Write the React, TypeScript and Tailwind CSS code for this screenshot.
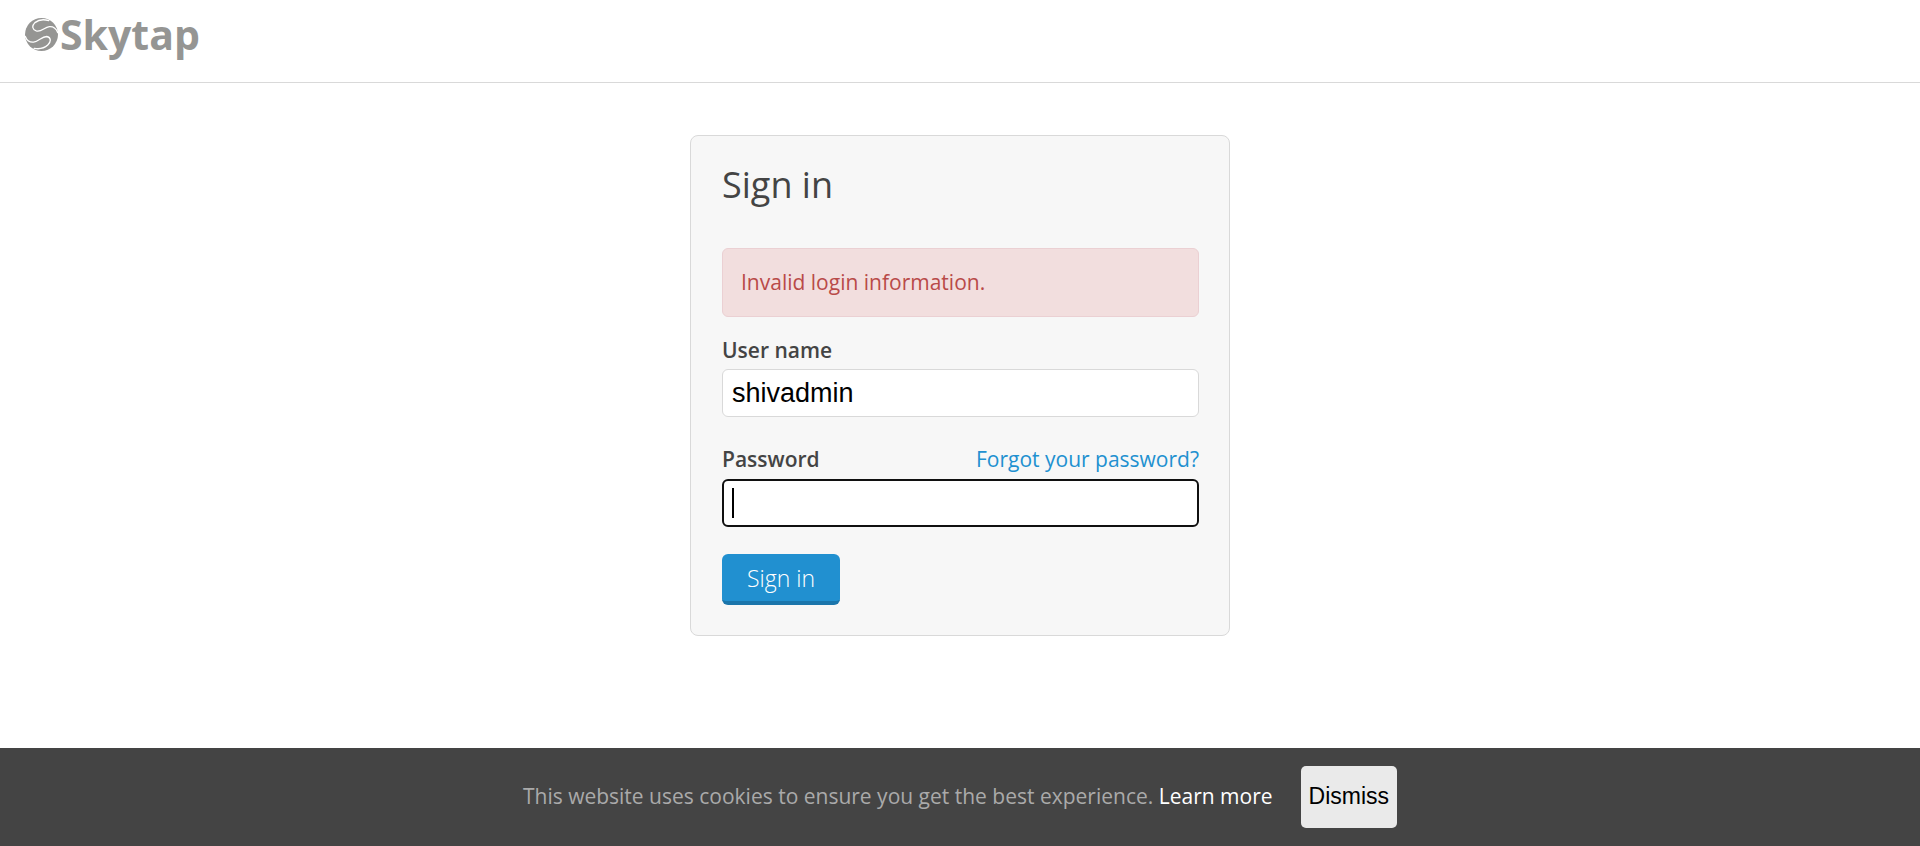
import React from 'react';

function Logo() {
  return (
    <a href="#" aria-label="Skytap" className="flex items-center gap-[2px] text-[#959593]">
      <svg viewBox="0 0 100 100" className="size-[33px]" aria-hidden="true">
        <circle cx="50" cy="50" r="50" fill="currentColor" />
        <g fill="none" stroke="#fff" strokeWidth="4" strokeLinecap="round">
          <path d="M72 8C56 3 40 6 30 14C20 24 22 35 34 39C50 43 58 28 74 26C88 25 95 33 99 44" />
          <path d="M1 56C5 67 14 74 26 73C42 71 50 56 66 56C79 58 80 72 69 82C58 92 44 95 28 92" />
        </g>
      </svg>
      <span className="text-[41px] leading-[46px] font-bold">Skytap</span>
    </a>
  );
}

export default function App() {
  return (
    <div className="flex min-h-screen flex-col bg-white font-['Open_Sans',sans-serif] text-[21px] leading-[29px] text-[#444]">
      <header className="border-b border-[#d9d9d9] px-[25px] pt-[11px] pb-[25px]">
        <Logo />
      </header>

      <main className="flex grow justify-center px-4 pt-[52px] pb-8">
        <form className="w-full max-w-[540px] self-start rounded-lg border border-[#d9d9d9] bg-[#f7f7f7] pt-[29px] pr-[30px] pb-[30px] pl-[31px]">
          <h1 className="text-[36px] leading-[40px]">Sign in</h1>
          <p role="alert" className="mt-[43px] rounded-md border border-[#ebd0d3] bg-[#f2dede] px-[18px] py-[19px] text-[#b94a48]">
            Invalid login information.
          </p>
          <label htmlFor="username" className="mt-[19px] block font-semibold">User name</label>
          <input
            id="username"
            type="text"
            defaultValue="shivadmin"
            className="mt-1 block h-12 w-full rounded-md border border-[#d9d9d9] bg-white px-[9px] font-['Liberation_Sans',sans-serif] text-[27px] text-black"
          />
          <div className="mt-7 flex justify-between">
            <label htmlFor="password" className="font-semibold">Password</label>
            <a href="#" className="text-[#2190d0]">Forgot your password?</a>
          </div>
          <div className="relative mt-[5px]">
            <input
              id="password"
              type="password"
              className="block h-12 w-full rounded-md border-2 border-[#101010] bg-white px-2 text-[27px] caret-transparent outline-none"
            />
            <span aria-hidden="true" className="absolute top-[9px] left-[10px] h-[30px] w-[2px] bg-black" />
          </div>
          <button type="submit" className="mt-[27px] block rounded-md border-b-4 border-[#1b75ab] bg-[#2190d0] px-[25px] pt-[10px] pb-2 text-[23px] font-light text-white">
            Sign in
          </button>
        </form>
      </main>

      <footer className="flex items-baseline justify-center gap-7 bg-[#444] px-4 py-[18px] text-[#aaa]">
        <p>
          This website uses cookies to ensure you get the best experience.{' '}
          <a href="#" className="text-white">Learn more</a>
        </p>
        <button type="button" className="rounded-[5px] bg-[#eaeaea] px-2 pt-4 pb-[17px] font-['Liberation_Sans',sans-serif] text-[23px] text-black">
          Dismiss
        </button>
      </footer>
    </div>
  );
}
